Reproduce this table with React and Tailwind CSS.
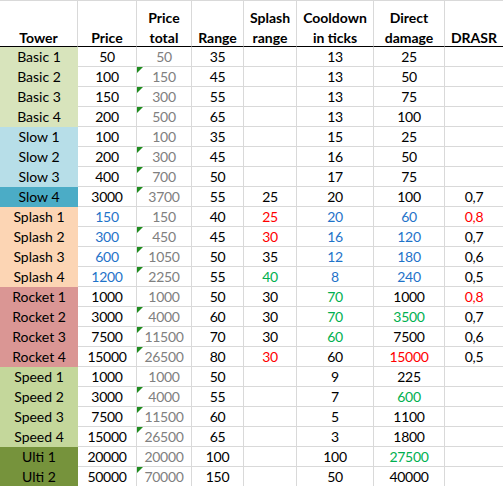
import React from "react";

const BLUE = "text-[#1f73c9]";
const RED = "text-[#ff0000]";
const GREEN = "text-[#00b050]";

const groups = {
  basic: "bg-[#d8e4bc]",
  slow: "bg-[#b7dee8]",
  slow4: "bg-[#4bacc6]",
  splash: "bg-[#fcd5b4]",
  rocket: "bg-[#da9694]",
  speed: "bg-[#c4d79b]",
  ulti: "bg-[#76933c]",
};

// [name, bg, price, total, range, splash, cooldown, damage, drasr, triangle]
const rows = [
  ["Basic 1", "basic", ["50"], ["50"], "35", null, ["13"], ["25"], null, false],
  ["Basic 2", "basic", ["100"], ["150"], "45", null, ["13"], ["50"], null, true],
  ["Basic 3", "basic", ["150"], ["300"], "55", null, ["13"], ["75"], null, true],
  ["Basic 4", "basic", ["200"], ["500"], "65", null, ["13"], ["100"], null, true],
  ["Slow 1", "slow", ["100"], ["100"], "35", null, ["15"], ["25"], null, false],
  ["Slow 2", "slow", ["200"], ["300"], "45", null, ["16"], ["50"], null, true],
  ["Slow 3", "slow", ["400"], ["700"], "50", null, ["17"], ["75"], null, true],
  ["Slow 4", "slow4", ["3000"], ["3700"], "55", ["25"], ["20"], ["100"], ["0,7"], true],
  ["Splash 1", "splash", ["150", BLUE], ["150"], "40", ["25", RED], ["20", BLUE], ["60", BLUE], ["0,8", RED], false],
  ["Splash 2", "splash", ["300", BLUE], ["450"], "45", ["30", RED], ["16", BLUE], ["120", BLUE], ["0,7"], true],
  ["Splash 3", "splash", ["600", BLUE], ["1050"], "50", ["35"], ["12", BLUE], ["180", BLUE], ["0,6"], true],
  ["Splash 4", "splash", ["1200", BLUE], ["2250"], "55", ["40", GREEN], ["8", BLUE], ["240", BLUE], ["0,5"], true],
  ["Rocket 1", "rocket", ["1000"], ["1000"], "50", ["30"], ["70", GREEN], ["1000"], ["0,8", RED], false],
  ["Rocket 2", "rocket", ["3000"], ["4000"], "60", ["30"], ["70", GREEN], ["3500", GREEN], ["0,7"], true],
  ["Rocket 3", "rocket", ["7500"], ["11500"], "70", ["30"], ["60", GREEN], ["7500"], ["0,6"], true],
  ["Rocket 4", "rocket", ["15000"], ["26500"], "80", ["30", RED], ["60"], ["15000", RED], ["0,5"], true],
  ["Speed 1", "speed", ["1000"], ["1000"], "50", null, ["9"], ["225"], null, false],
  ["Speed 2", "speed", ["3000"], ["4000"], "55", null, ["7"], ["600", GREEN], null, true],
  ["Speed 3", "speed", ["7500"], ["11500"], "60", null, ["5"], ["1100"], null, true],
  ["Speed 4", "speed", ["15000"], ["26500"], "65", null, ["3"], ["1800"], null, true],
  ["Ulti 1", "ulti", ["20000"], ["20000"], "100", null, ["100"], ["27500", GREEN], null, false],
  ["Ulti 2", "ulti", ["50000"], ["70000"], "150", null, ["50"], ["40000"], null, true],
];

const cellBase =
  "h-[20px] flex items-center justify-center border-r border-b border-[#d9d9d9] leading-[20px] whitespace-nowrap";

function Cell({ v, gray, last, tri }) {
  const color = gray ? "text-[#808080]" : v && v[1] ? v[1] : "text-black";
  return (
    <div className={`${cellBase} relative ${last ? "border-r-0" : ""} ${color}`}>
      {tri && (
        <svg className="absolute left-0 top-0" width="6" height="6" viewBox="0 0 6 6">
          <polygon points="0,0 6,0 0,6" fill="#1e8c1e" />
        </svg>
      )}
      <span className="tracking-[-0.3px]">{v ? v[0] : ""}</span>
    </div>
  );
}

function Head({ lines, last }) {
  return (
    <div
      className={`h-[46px] flex flex-col justify-end items-center border-b border-b-black ${
        last ? "" : "border-r border-r-[#d9d9d9]"
      } font-bold leading-[20px] text-center`}
    >
      <div className="-mb-[2px] flex flex-col items-center">
        {lines.map((l) => (
          <span key={l} className="whitespace-nowrap">
            {l}
          </span>
        ))}
      </div>
    </div>
  );
}

export default function App() {
  return (
    <div
      className="w-[503px] h-[486px] overflow-hidden bg-white text-[14px] text-black border-t border-[#d9d9d9]"
      style={{ fontFamily: "Lato, 'Open Sans', sans-serif" }}
    >
      <div className="grid grid-cols-[78px_59px_55px_52px_53px_77px_71px_58px]">
        <Head lines={["Tower"]} />
        <Head lines={["Price"]} />
        <Head lines={["Price", "total"]} />
        <Head lines={["Range"]} />
        <Head lines={["Splash", "range"]} />
        <Head lines={["Cooldown", "in ticks"]} />
        <Head lines={["Direct", "damage"]} />
        <Head lines={["DRASR"]} last />
        {rows.map((r) => (
          <React.Fragment key={r[0]}>
            <div className={`h-[20px] flex items-center justify-center leading-[20px] whitespace-nowrap ${groups[r[1]]}`}>
              <span>{r[0]}</span>
            </div>
            <Cell v={r[2]} />
            <Cell v={r[3]} gray tri={r[9]} />
            <Cell v={[r[4]]} />
            <Cell v={r[5]} />
            <Cell v={r[6]} />
            <Cell v={r[7]} />
            <Cell v={r[8]} last />
          </React.Fragment>
        ))}
      </div>
    </div>
  );
}
